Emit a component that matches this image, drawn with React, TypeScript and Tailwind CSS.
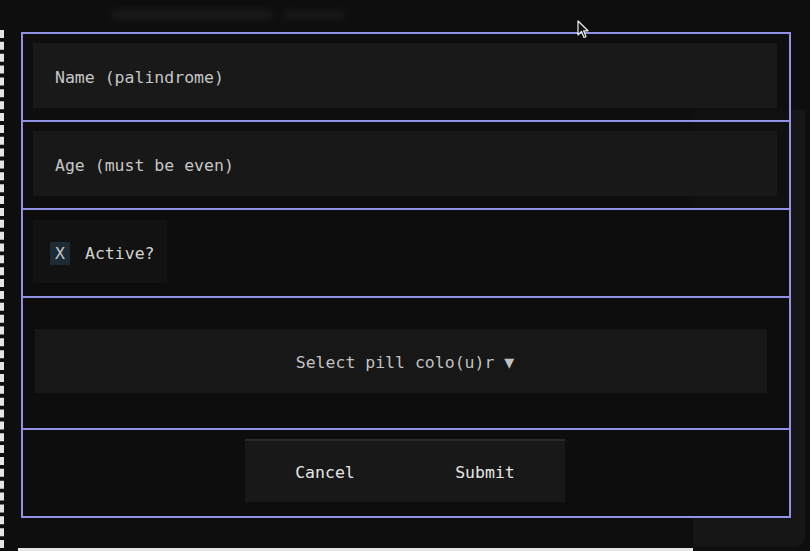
import React from "react";

const mono = { fontFamily: '"DejaVu Sans Mono", "Liberation Mono", monospace' };

const blobs = [
  [30, 180], [50, 120], [26, 210], [40, 90], [34, 160], [60, 140],
  [28, 200], [44, 110], [36, 170], [30, 80], [52, 130], [24, 100],
];

export default function App() {
  return (
    <div className="relative w-[810px] h-[551px] overflow-hidden bg-[#0e0e0e]" style={mono}>
      {/* backdrop: blurred terminal */}
      <div className="flex h-full">
        <div className="flex-1 flex flex-col">
          <div className="h-[30px] flex items-center pl-[112px] gap-3 blur-[3px]">
            <div className="w-[160px] h-[10px] bg-[#1a1a1a]" />
            <div className="w-[60px] h-[10px] bg-[#181818]" />
          </div>
          <div className="flex-1 flex border-l-4 border-dashed border-[#e5e5e5]">
            <div className="flex-1 flex flex-col pt-[200px] pl-6 gap-[13px] blur-[3px]">
              {blobs.map(([ml, w], i) => (
                <div key={i} className="h-[9px] bg-[#1d1d1d]" style={{ marginLeft: ml, width: w }} />
              ))}
            </div>
          </div>
          <div className="h-[3px] ml-[18px] bg-[#e5e5e5]" />
        </div>
        <div className="w-[112px] mt-[110px] mb-[4px] mr-[5px] bg-[#161616] rounded-br-[10px]" />
      </div>

      {/* modal form */}
      <div className="absolute left-[21px] top-[32px] w-[770px] flex flex-col border-2 border-[#9191e6] bg-[#0f0f0f]/80">
        <div className="h-[88px] border-b-2 border-[#9191e6] pt-[9px] pl-[10px] pr-[12px]">
          <div className="h-[65px] bg-[#191919] flex items-center pl-[22px] pt-[5px] text-[16.5px] text-[#c6c6c6]">
            Name (palindrome)
          </div>
        </div>
        <div className="h-[88px] border-b-2 border-[#9191e6] pt-[9px] pl-[10px] pr-[12px]">
          <div className="h-[65px] bg-[#181818] flex items-center pl-[22px] pt-[5px] text-[16.5px] text-[#c6c6c6]">
            Age (must be even)
          </div>
        </div>
        <div className="h-[88px] border-b-2 border-[#9191e6] bg-[#0c0c0c] pt-[10px] pl-[10px]">
          <div className="w-[134px] h-[63px] bg-[#121212] flex items-center gap-[15px] pl-[17px] pt-[3px]">
            <span className="w-[20px] h-[23px] bg-[#1c2b35] flex items-center justify-center pt-[2px] text-[16.5px] text-[#c6c6c6]">
              X
            </span>
            <span className="text-[16.5px] pt-[2px] text-[#d2d2d2]">Active?</span>
          </div>
        </div>
        <div className="h-[132px] border-b-2 border-[#9191e6] bg-[#0d0d0d] pt-[31px] pl-[12px] pr-[22px]">
          <div className="h-[64px] bg-[#171717] flex items-center justify-center pt-[5px] text-[16.5px] text-[#c2c2c2]">
            <span className="ml-[8px]">Select pill colo(u)r ▼</span>
          </div>
        </div>
        <div className="h-[86px] bg-[#0d0d0d] flex justify-center pt-[9px]">
          <div className="h-[63px] w-[320px] flex border-t-2 border-[#2b2b2b] bg-[#181818] ml-[-2px] pt-[3px]">
            <div className="w-[160px] flex items-center justify-center text-[16.5px] text-[#e6e6e6]">Cancel</div>
            <div className="w-[160px] flex items-center justify-center text-[16.5px] text-[#e6e6e6]">Submit</div>
          </div>
        </div>
      </div>

      {/* mouse cursor */}
      <svg className="absolute left-[577px] top-[20px]" width="12" height="19" viewBox="0 0 12 19">
        <path d="M1 1 L1 15 L4.5 11.5 L7 17.5 L9 16.6 L6.6 10.8 L11 10.8 Z" fill="#111" stroke="#eee" strokeWidth="1.2" strokeLinejoin="round" />
      </svg>
    </div>
  );
}
